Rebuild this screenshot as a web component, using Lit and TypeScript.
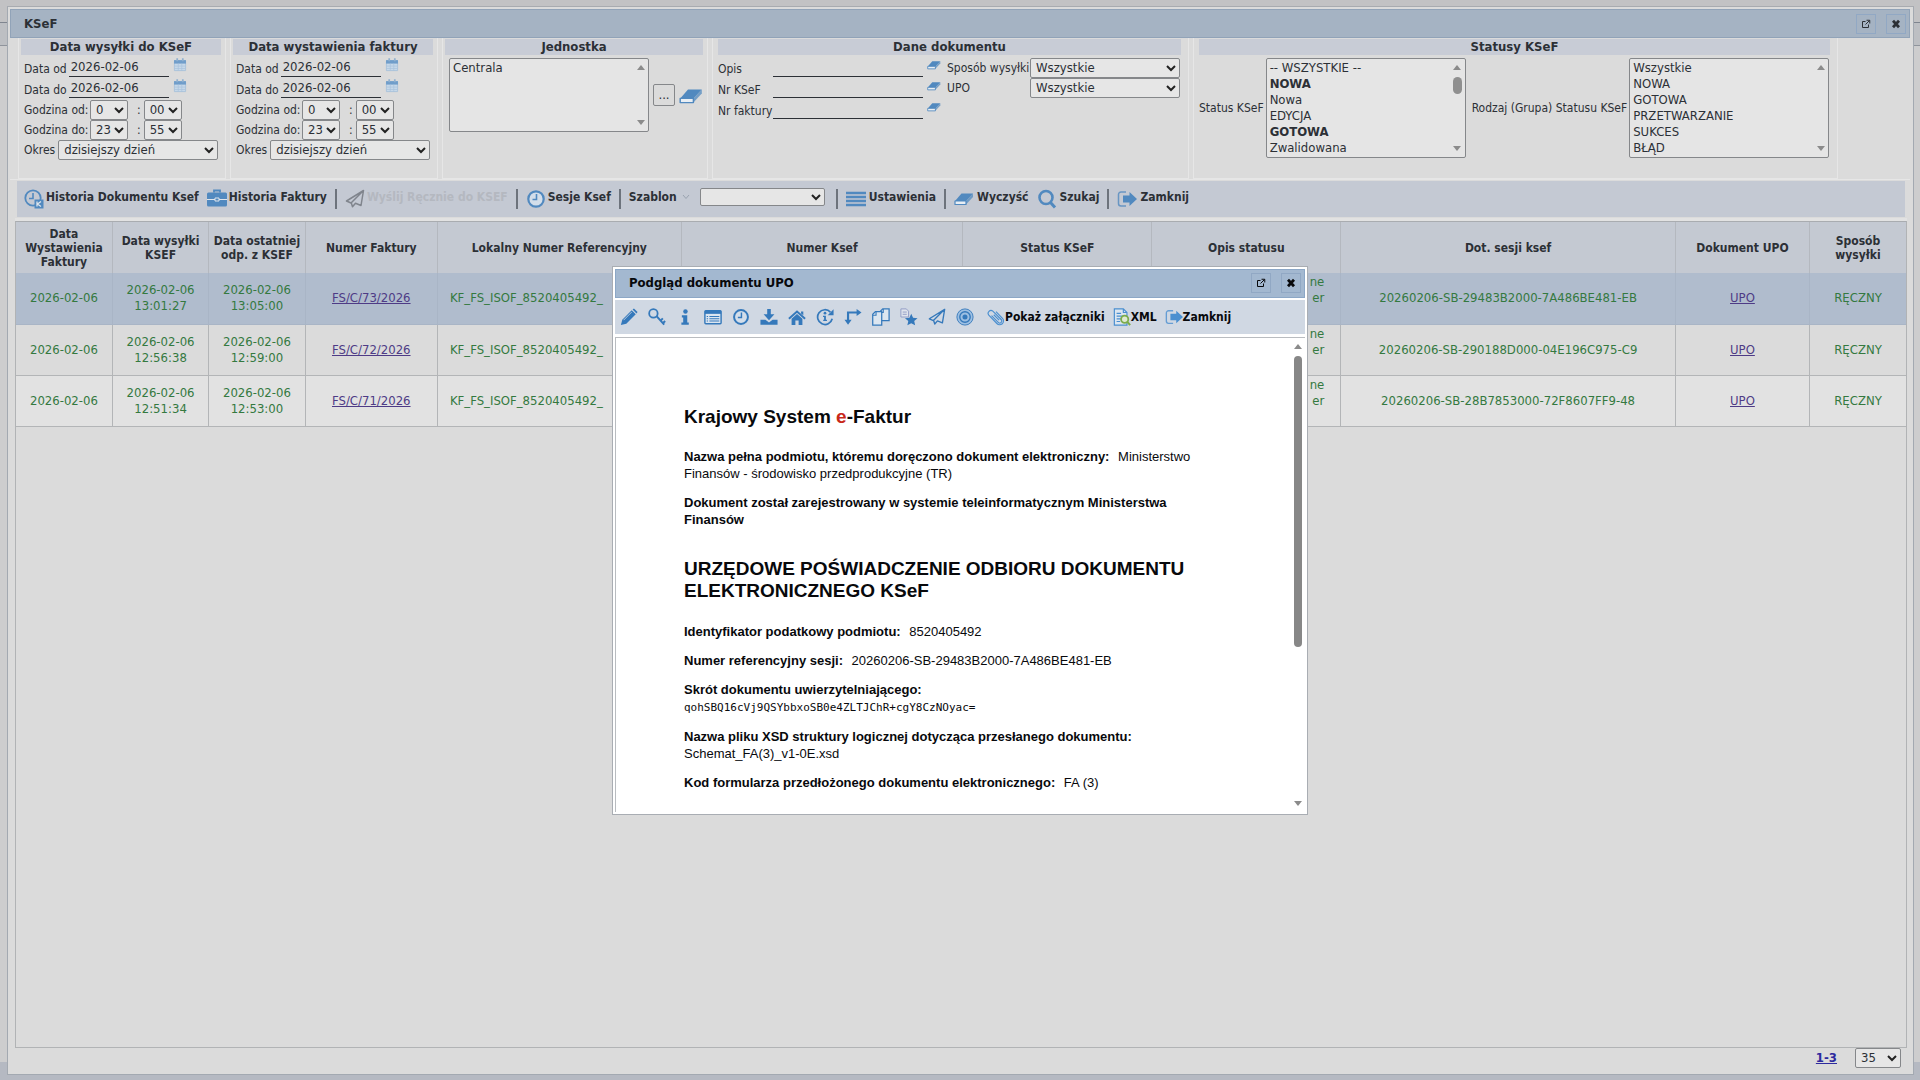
import { LitElement, html, svg, css, nothing, type TemplateResult, type SVGTemplateResult } from "lit";
import { customElement } from "lit/decorators.js";
import { classMap } from "lit/directives/class-map.js";

/* 20x20 line and fill icons; every shape is painted with currentColor unless stated */
const icons: Record<string, SVGTemplateResult> = {
  calendar: svg`<path d="M2 5h16v13H2z" fill="#c6d8e9" stroke="#9dbbd8"/><path d="M1.500 3h17v5h-17z" fill="#6f9dca"/><path d="M6 .5v4M14 .5v4" stroke="#8fb0d0" stroke-width="2.500"/><path d="M2 11.500h16M2 15h16M7.500 8v10M12.500 8v10" stroke="#a9c3dc" fill="none"/>`,
  eraser: svg`<path d="M7.500 4.500H19L12 12H1z" fill="currentColor"/><path d="M1 12h11v3.500H1z" fill="#e8eef4" stroke="currentColor" stroke-width="1.200" stroke-linejoin="round"/><path d="M12 15.500V12l7-7.500V8z" fill="currentColor" opacity=".75"/>`,
  historyDoc: svg`<circle cx="9" cy="9" r="7.700" fill="none" stroke="currentColor" stroke-width="1.800"/><path d="M9 4v5.500H5" fill="none" stroke="currentColor" stroke-width="1.600"/><path d="M10.500 10.500h9v9h-9z" fill="currentColor"/><path d="M13 12.500v5M17 12.500l-3.500 2.500 3.500 2.500" fill="none" stroke="#dfe5ec" stroke-width="1.300"/>`,
  briefcase: svg`<path d="M7 3.500V1.500h6v2" fill="none" stroke="currentColor" stroke-width="1.800"/><rect x="0" y="3.500" width="20" height="14" rx="1.500" fill="currentColor"/><path d="M0 10.500h8M12 10.500h8" stroke="#dfe5ec"/><path d="M8 9h4v3H8z" fill="none" stroke="#dfe5ec"/>`,
  plane: svg`<path d="M18.500 1.500 1.500 12l4.500 2 12.500-12.500-2.500 15-5.500-2.200-3 3.500-1.500-4.800" fill="none" stroke="currentColor" stroke-width="1.500" stroke-linejoin="round"/>`,
  clock: svg`<circle cx="10" cy="10" r="7.700" fill="#d3deea" stroke="currentColor" stroke-width="2.200"/><path d="M10.500 5v5.500H6.500" fill="none" stroke="currentColor" stroke-width="1.600"/>`,
  list: svg`<path d="M0 4h20M0 8h20M0 12h20M0 16h20" stroke="currentColor" stroke-width="2.600"/>`,
  search: svg`<circle cx="9" cy="8.500" r="6.500" fill="none" stroke="currentColor" stroke-width="2.600"/><path d="M13.500 13.500l4.500 5" stroke="currentColor" stroke-width="3"/>`,
  exit: svg`<path d="M9 3H4a2.500 2.500 0 0 0-2.500 2.500v9A2.500 2.500 0 0 0 4 17h5" fill="none" stroke="currentColor" stroke-width="1.500" opacity=".8"/><path d="M6 6.500h6.500V3L20 10l-7.500 7v-3.500H6z" fill="currentColor"/>`,
  open: svg`<path d="M9 5H3v12h12v-6" fill="none" stroke="currentColor" stroke-width="2"/><path d="M11 2.500h6.500V9M17 3l-8 8" fill="none" stroke="currentColor" stroke-width="2"/>`,
  close: svg`<path d="M4 3.500l12 13M16 3.500l-12 13" stroke="currentColor" stroke-width="5.500"/>`,
  pencil: svg`<path d="M1 19l1.500-6L13 2.500l4.500 4.500L7 17.500z" fill="currentColor"/><path d="M14 1.700l1.500-1.200 4 4-1.200 1.500z" fill="currentColor"/><path d="M4 13.500l9-9" stroke="#cfd8e3" stroke-width=".9"/>`,
  key: svg`<circle cx="6" cy="6" r="4.700" fill="none" stroke="currentColor" stroke-width="2"/><path d="M9.500 9l8.500 9.500M14 14l2.500-2.500M16.500 17l2.500-2.500" fill="none" stroke="currentColor" stroke-width="2.200"/>`,
  info: svg`<circle cx="10.500" cy="4" r="2.500" fill="currentColor"/><path d="M6.500 8h6v8h1.700v2.500H6V16h2v-5.500H6.500z" fill="currentColor"/>`,
  card: svg`<rect x="1" y="3" width="18" height="14.500" rx="1" fill="#dce6f0" stroke="currentColor" stroke-width="1.600"/><path d="M1 3h18v3.500H1z" fill="currentColor"/><path d="M6 9.500h11M6 12h11M6 14.500h11" stroke="currentColor" stroke-width="1.200"/><path d="M3 9.500h1.500M3 12h1.500M3 14.500h1.500" stroke="currentColor" stroke-width="1.200"/>`,
  download: svg`<path d="M8 1h4v6h4l-6 6.500L4 7h4z" fill="currentColor"/><path d="M.5 13H6l4 3 4-3h5.500v5.500H.5z" fill="currentColor"/>`,
  home: svg`<path d="M1 12L10 4l9 8" fill="none" stroke="currentColor" stroke-width="2.200"/><path d="M14.500 4H17v4l-2.500-2z" fill="currentColor"/><path d="M4 12l6-5.300 6 5.300v7h-4.200v-5H8.200v5H4z" fill="currentColor"/>`,
  infoRefresh: svg`<path d="M16 4.500A8.200 8.200 0 1 0 18 12" fill="none" stroke="currentColor" stroke-width="1.900"/><path d="M19.500 1.500V8H13z" fill="currentColor"/><circle cx="10" cy="5.700" r="1.500" fill="currentColor"/><path d="M7.800 8.500H11V13h1.200v1.500H8V13h1v-3H7.800z" fill="currentColor"/>`,
  branch: svg`<path d="M4.500 14V5H15" fill="none" stroke="currentColor" stroke-width="2.400"/><path d="M14 1l5.500 4-5.500 4zM.5 13h8l-4 5.500z" fill="currentColor"/>`,
  copies: svg`<path d="M9 14V4l3-3h7v13z" fill="#dce6f0" stroke="currentColor" stroke-width="1.400"/><path d="M12.500 1v4H9" fill="none" stroke="currentColor" stroke-width="1.200"/><path d="M.8 19V7l3-3h7v15z" fill="#dce6f0" stroke="currentColor" stroke-width="1.400"/><path d="M4.500 4v4H1" fill="none" stroke="currentColor" stroke-width="1.200"/>`,
  docStar: svg`<path d="M1 1h6l2.500 2.500V10H1z" fill="#dfe3ec" stroke="#8d98c4"/><path d="M3 4.500h4.500M3 7h4.500" stroke="#8d98c4"/><path d="M12.500 6.500l2 4.200 5 .6-3.700 3.200 1 4.800-4.300-2.400-4.300 2.400 1-4.800-3.700-3.200 5-.6z" fill="currentColor"/>`,
  target: svg`<circle cx="10" cy="10" r="9" fill="#9dbfe2" stroke="currentColor" stroke-width="1"/><circle cx="10" cy="10" r="5.800" fill="none" stroke="currentColor" stroke-width="1.500"/><circle cx="10" cy="10" r="2.800" fill="currentColor"/>`,
  clip: svg`<path d="M5 8.500l7.500 7.500a2.200 2.200 0 0 0 3.200-3.200L6.500 3.500A3.200 3.200 0 0 0 2 8l9 9.200a4.200 4.200 0 0 0 6.200-5.700L10 4M7.500 7.500l6 6" fill="none" stroke="currentColor" stroke-width="1.300"/>`,
  xml: svg`<path d="M1.500 1h10l4 4v14h-14z" fill="#dce6f0" stroke="currentColor" stroke-width="1.300"/><path d="M11.500 1v4h4M4 6h5M4 9h8M4 12h5M4 15h4" fill="none" stroke="currentColor" stroke-width="1.300"/><circle cx="13" cy="12.500" r="4" fill="#dfead2" stroke="#7cac4a" stroke-width="2"/><path d="M16 15.500l3 3.500" stroke="#7cac4a" stroke-width="2.200"/>`,
};

const icon = (name: string, size = "m") =>
  html`<svg class="icon ${size}" viewBox="0 0 20 20" aria-hidden="true">${icons[name]}</svg>`;

const shared = css`
  * { box-sizing: border-box; }
  button, select, input { font: inherit; color: inherit; margin: 0; }
  button { border: 0; padding: 0; background: none; }
  .icon { display: block; flex: none; width: 20px; height: 20px; }
  .icon.s { width: 16px; height: 16px; }
  .icon.l { width: 24px; height: 24px; }
  .icon.xs { width: 10px; height: 10px; }
  .titlebar {
    display: flex; align-items: center; gap: 10px; flex: none; height: 29px;
    padding: 0 3px 0 13px; font-size: 13px; font-weight: bold;
    background: #a5b3c3; border: 1px solid #91a3b8;
  }
  .titlebar h1, .titlebar h2 { margin: 0; flex: 1; font-size: 13px; line-height: 16px; }
  .winbtn {
    display: grid; place-items: center; width: 20px; height: 20px;
    border: 1px solid #91a8c4;
  }
  .arrow-up, .arrow-down { border: 4px solid transparent; width: 0; height: 0; }
  .arrow-up { border-bottom: 5px solid #8b8b8b; border-top: 0; }
  .arrow-down { border-top: 5px solid #8b8b8b; border-bottom: 0; }
`;

interface ListOption { text: string; bold?: boolean; }

interface Row { date: string; sent: string; reply: string; number: string; session: string; }

const rows: Row[] = [
  { date: "2026-02-06", sent: "13:01:27", reply: "13:05:00", number: "FS/C/73/2026", session: "20260206-SB-29483B2000-7A486BE481-EB" },
  { date: "2026-02-06", sent: "12:56:38", reply: "12:59:00", number: "FS/C/72/2026", session: "20260206-SB-290188D000-04E196C975-C9" },
  { date: "2026-02-06", sent: "12:51:34", reply: "12:53:00", number: "FS/C/71/2026", session: "20260206-SB-28B7853000-72F8607FF9-48" },
];

const columns: [string, string][] = [
  ["Data Wystawienia Faktury", "c-date"], ["Data wysyłki KSEF", "c-sent"], ["Data ostatniej odp. z KSEF", "c-reply"],
  ["Numer Faktury", "c-num"], ["Lokalny Numer Referencyjny", "c-ref"], ["Numer Ksef", "c-ksef"], ["Status KSeF", "c-status"],
  ["Opis statusu", "c-desc"], ["Dot. sesji ksef", "c-session"], ["Dokument UPO", "c-upo"], ["Sposób wysyłki", "c-mode"],
];

/* Floating preview of the official receipt */
@customElement("upo-dialog")
export class UpoDialog extends LitElement {
  static styles = [shared, css`
    :host {
      display: flex; flex-direction: column; width: min(696px, 100%); height: min(549px, 100%);
      padding: 2px; background: #fff; border: 1px solid #a9adb3; color: #08090c;
      box-sizing: border-box;
    }
    .titlebar { background: #a3b8d0; border-color: #8ca7c6; }
    .tools { display: flex; align-items: center; flex: none; height: 34px; margin-top: 2px; background: #d0d8e3; color: #3579bb; }
    .tool { display: grid; place-items: center; width: 28px; height: 34px; }
    .tool .icon { width: 18px; height: 18px; }
    .text-tool { display: flex; align-items: center; font-size: 12px; font-weight: bold; color: #08090c; margin-left: 8px; }
    .text-tool .icon { color: #4a8fd0; width: 18px; height: 18px; }
    .view { flex: 1; min-height: 0; display: flex; margin: 3px 0 0; border: 1px solid #b9bcc0; border-width: 1px 0 0 1px; }
    .doc { flex: 1; min-width: 0; overflow: hidden; padding: 68px 67px 0 68px; font: 13px/17px "Liberation Sans", Arial, sans-serif; }
    .doc p { margin: 0 0 12px; }
    .doc b { margin-right: 5px; }
    .doc h3 { margin: 0 0 20px; font-size: 19px; line-height: 22px; }
    .doc h3.main { margin: 30px 0 21px; }
    .doc em { color: #c8281a; font-style: normal; }
    .doc .hash { display: block; padding-top: 1px; font-family: "DejaVu Sans Mono", monospace; font-size: 11px; }
    .doc .below { display: block; }
    .bar { flex: none; width: 14px; display: flex; flex-direction: column; align-items: center; padding: 6px 0; }
    .thumb { width: 8px; height: 291px; margin-top: 7px; border-radius: 4px; background: #878787; }
    .bar .arrow-down { margin-top: auto; }
  `];

  private tools: [string, string][] = [
    ["pencil", "Edytuj"], ["key", "Klucz"], ["info", "Informacja"], ["card", "Szczegóły"], ["clock", "Historia"],
    ["download", "Pobierz"], ["home", "Start"], ["infoRefresh", "Odśwież"], ["branch", "Powiązania"], ["copies", "Kopiuj"],
    ["docStar", "Ulubione"], ["plane", "Wyślij"], ["target", "Cel"],
  ];

  render() {
    return html`
      <header class="titlebar">
        <h2>Podgląd dokumentu UPO</h2>
        <button class="winbtn" aria-label="Otwórz w oknie">${icon("open", "xs")}</button>
        <button class="winbtn" aria-label="Zamknij okno">${icon("close", "xs")}</button>
      </header>
      <div class="tools" role="toolbar">
        ${this.tools.map(([name, label]) => html`<button class="tool" aria-label=${label}>${icon(name)}</button>`)}
        <button class="text-tool">${icon("clip")}Pokaż załączniki</button>
        <button class="text-tool">${icon("xml")}XML</button>
        <button class="text-tool">${icon("exit")}Zamknij</button>
      </div>
      <div class="view">
        <article class="doc">
          <h3>Krajowy System <em>e</em>-Faktur</h3>
          <p><b>Nazwa pełna podmiotu, któremu doręczono dokument elektroniczny:</b> Ministerstwo Finansów - środowisko przedprodukcyjne (TR)</p>
          <p><b>Dokument został zarejestrowany w systemie teleinformatycznym Ministerstwa Finansów</b></p>
          <h3 class="main">URZĘDOWE POŚWIADCZENIE ODBIORU DOKUMENTU ELEKTRONICZNEGO KSeF</h3>
          <p><b>Identyfikator podatkowy podmiotu:</b> 8520405492</p>
          <p><b>Numer referencyjny sesji:</b> 20260206-SB-29483B2000-7A486BE481-EB</p>
          <p><b>Skrót dokumentu uwierzytelniającego:</b> <span class="hash">qohSBQ16cVj9QSYbbxoSB0e4ZLTJChR+cgY8CzNOyac=</span></p>
          <p><b>Nazwa pliku XSD struktury logicznej dotycząca przesłanego dokumentu:</b> <span class="below">Schemat_FA(3)_v1-0E.xsd</span></p>
          <p><b>Kod formularza przedłożonego dokumentu elektronicznego:</b> FA (3)</p>
        </article>
        <div class="bar" aria-hidden="true"><i class="arrow-up"></i><i class="thumb"></i><i class="arrow-down"></i></div>
      </div>`;
  }
}

@customElement("app-root")
export class AppRoot extends LitElement {
  static styles = [shared, css`
    :host {
      display: block; position: relative; min-height: 100vh; padding: 6px 6px 5px 7px; box-sizing: border-box;
      font: 12px/16px "DejaVu Sans Condensed", "DejaVu Sans", Tahoma, sans-serif; color: #2c3036;
      background: linear-gradient(#c2c2c4 0 22px, #7f858f 22px 23px, #bdbfc3 23px 45px, #8f949c 45px 46px, #cdcdce 46px calc(100% - 18px), #b5b9c2 calc(100% - 18px));
    }
    .window {
      display: flex; flex-direction: column; min-height: calc(100vh - 11px); padding: 2px 3px 3px 2px;
      background: #dbdbdb; border: 1px solid #a3a9b1; border-top-color: #a8abb0;
    }
    .scrim-pane { position: absolute; inset: 0; display: grid; place-items: center; }

    .filters {
      display: grid; grid-template-columns: 208px 208px 266px 477px 645px; gap: 4px; height: 142px;
      padding-left: 8px; border-bottom: 1px solid #e6e6e6;
    }
    .panel { padding: 1px 4px 0 2px; border: 1px solid #e6e6e6; border-top: 0; }
    .panel.wide { padding: 1px 7px 0 5px; }
    .panel h2 {
      margin: 0 0 3px; height: 16px; font-size: 13px; line-height: 16px; text-align: center; background: #c8ccd6;
    }
    .field { display: flex; height: 21px; padding-left: 3px; gap: 2px; line-height: 22px; }
    .field input {
      width: 100px; height: 19px; padding: 0 2px 1px; font-size: 13px; background: none; border: 0; border-bottom: 1px solid #2c3036;
      border-radius: 0;
    }
    .field .icon { width: 14px; height: 14px; margin-left: 2px; }
    .field button { align-self: flex-start; }
    .hour { display: flex; align-items: center; gap: 3px; height: 20px; padding-left: 3px; }
    .hour .colon { margin-left: 6px; }
    .hour label { width: 63px; white-space: nowrap; }
    .filters .hour label.auto { width: auto; }
    select.pick {
      appearance: none; height: 20px; padding: 0 5px; font-size: 13px; line-height: 16px;
      border: 1px solid #85878a; border-radius: 2px;
      background: #e6e6e6 url("data:image/svg+xml,%3Csvg xmlns='http://www.w3.org/2000/svg' width='10' height='7'%3E%3Cpath d='M1 1l4 4 4-4' fill='none' stroke='%23222' stroke-width='2'/%3E%3C/svg%3E") no-repeat right 3px center;
    }
    .w-hour { width: 38px; }
    .w-period { width: 160px; }
    .w-kind { width: 150px; }
    .w-template { width: 125px; }
    .hour select.w-hour { padding-right: 0; }

    .unit { display: flex; align-items: flex-start; gap: 4px; padding-left: 4px; }
    .more { flex: none; width: 22px; height: 22px; border: 1px solid #85878a; border-radius: 2px; font-size: 13px; }
    .unit .more, .unit .erase { margin-top: 26px; }
    .unit .erase { color: #5189bf; }
    .listbox { position: relative; flex: none; width: 200px; }
    .listbox select {
      display: block; width: 100%; height: 100px; padding: 1px 0; font-size: 13px; overflow: hidden; scrollbar-width: none;
      border: 1px solid #85878a; border-radius: 2px; background: #e5e5e5; outline: 0;
    }
    .listbox.short select { height: 74px; }
    .listbox option { height: 16px; min-height: 16px; padding: 0 3px; line-height: 16px; }
    .listbox option.bold { font-weight: bold; }
    .scroll { position: absolute; top: 7px; bottom: 7px; right: 4px; display: flex; flex-direction: column; align-items: center; pointer-events: none; }
    .scroll .knob { width: 9px; height: 17px; margin-top: 7px; border-radius: 5px; background: #8f8f8f; }
    .scroll .arrow-down { margin-top: auto; }
    .two { display: grid; grid-template-columns: 229px auto; }
    .doc-field { display: grid; grid-template-columns: 55px 150px 18px; height: 21px; line-height: 22px; }
    .doc-field input { height: 19px; padding: 0; background: none; border: 0; border-bottom: 1px solid #2c3036; border-radius: 0; font-size: 13px; }
    .doc-field button { align-self: flex-start; padding-left: 3px; color: #5189bf; }
    .doc-field .icon { height: 14px; }
    .kind { display: grid; grid-template-columns: 83px 150px; height: 20px; align-items: center; white-space: nowrap; }
    .statuses { display: flex; align-items: center; gap: 2px; white-space: nowrap; }
    .statuses label + .listbox { margin-right: 4px; }

    .toolbar {
      display: flex; align-items: center; height: 36px; margin: 1px 5px 0 7px; padding: 0 0 4px 7px; gap: 8px;
      background: #c4c9d3; font-size: 12px; font-weight: bold; white-space: nowrap;
    }
    .cmd { display: flex; align-items: center; gap: 2px; font-weight: bold; }
    .cmd .icon { color: #5189bf; margin-top: 3px; }
    .cmd.off { color: #b4b8c0; }
    .cmd.off .icon { color: #80858d; }
    .rule { width: 2px; height: 20px; background: #6d737c; margin-top: 4px; }
    .toolbar .pick { height: 18px; margin: 0 3px 0 2px; }
    .pick ~ .cmd { gap: 3px; }
    .cmd .drop { width: 8px; height: 6px; margin-left: 3px; }

    .grid { flex: 1; margin: 4px 3px 0 5px; border: 1px solid #b1b3b5; border-top-color: #a9acb0; box-shadow: 0 -3px 0 #e2e2e2; }
    table { width: 100%; border-collapse: collapse; table-layout: fixed; }
    th { height: 51px; padding: 0 2px; line-height: 14px; font-size: 12px; background: #c4c9d2; border-right: 1px solid #b4b8bf; }
    td { height: 51px; padding: 0 12px; text-align: center; font-size: 13px; color: #34793f; border: 1px solid #b3b5b7; border-width: 0 1px 1px 0; }
    td:last-child, th:last-child { border-right: 0; }
    tr.odd td { background: #e2e2e2; }
    tr.current td { background: #b0bccd; border-color: #a9b5c6; }
    td a { color: #4e3b86; }
    td.c-desc { text-align: right; padding-right: 16px; }
    td.c-ref { text-align: left; white-space: nowrap; }
    th.c-date { width: 5.1%; } th.c-sent { width: 5.1%; } th.c-reply { width: 5.1%; } th.c-num { width: 7%; }
    th.c-ref { width: 12.9%; } th.c-ksef { width: 14.9%; } th.c-status { width: 10%; } th.c-desc { width: 10%; }
    th.c-session { width: 17.7%; } th.c-upo { width: 7.1%; }

    .pager { display: flex; justify-content: flex-end; flex: none; gap: 18px; height: 23px; padding-right: 9px; line-height: 20px; }
    .pager a { font-weight: bold; font-size: 13px; color: #2e2a9e; }
    .pager .pick { width: 46px; }
  `];

  private pick(id: string, cls: string, value: string) {
    return html`<select id=${id} class="pick ${cls}" aria-label=${id}><option>${value}</option></select>`;
  }

  private datePanel(title: string, key: string) {
    const dateRow = (label: string, id: string) => html`
      <div class="field"><label for=${id}>${label}</label><input id=${id} value="2026-02-06"><button aria-label="Kalendarz">${icon("calendar", "s")}</button></div>`;
    const hourRow = (label: string, id: string, h: string, m: string) => html`
      <div class="hour"><label for=${id}>${label}</label>${this.pick(id, "w-hour", h)}<span class="colon">:</span>${this.pick(`${id}-min`, "w-hour", m)}</div>`;
    return html`
      <section class="panel">
        <h2>${title}</h2>
        ${dateRow("Data od", `${key}-od`)}${dateRow("Data do", `${key}-do`)}
        ${hourRow("Godzina od:", `${key}-godz-od`, "0", "00")}${hourRow("Godzina do:", `${key}-godz-do`, "23", "55")}
        <div class="hour"><label class="auto" for="${key}-okres">Okres</label>${this.pick(`${key}-okres`, "w-period", "dzisiejszy dzień")}</div>
      </section>`;
  }

  private listbox(id: string, label: string, options: ListOption[], opts: { short?: boolean; knob?: boolean } = {}) {
    return html`
      <div class=${classMap({ listbox: true, short: !!opts.short })}>
        <select id=${id} multiple aria-label=${label}>
          ${options.map(o => html`<option class=${o.bold ? "bold" : ""}>${o.text}</option>`)}
        </select>
        <div class="scroll" aria-hidden="true"><i class="arrow-up"></i>${opts.knob ? html`<i class="knob"></i>` : nothing}<i class="arrow-down"></i></div>
      </div>`;
  }

  private cmd(name: string | null, label: string, extra: TemplateResult | typeof nothing = nothing) {
    return html`<button class="cmd">${name ? icon(name) : nothing}${label}${extra}</button>`;
  }

  private docField(label: string, id: string) {
    return html`<div class="doc-field"><label for=${id}>${label}</label><input id=${id}><button aria-label="Wyczyść pole">${icon("eraser", "s")}</button></div>`;
  }

  render() {
    const rule = html`<span class="rule"></span>`;
    return html`
      <main class="window">
        <header class="titlebar">
          <h1>KSeF</h1>
          <button class="winbtn" aria-label="Otwórz w oknie">${icon("open", "xs")}</button>
          <button class="winbtn" aria-label="Zamknij okno">${icon("close", "xs")}</button>
        </header>

        <div class="filters">
          ${this.datePanel("Data wysyłki do KSeF", "wysylka")}
          ${this.datePanel("Data wystawienia faktury", "wystawienie")}
          <section class="panel">
            <h2>Jednostka</h2>
            <div class="unit">
              ${this.listbox("jednostka", "Jednostka", [{ text: "Centrala" }], { short: true })}
              <button class="more">...</button>
              <button class="erase" aria-label="Wyczyść jednostkę">${icon("eraser", "l")}</button>
            </div>
          </section>
          <section class="panel wide">
            <h2>Dane dokumentu</h2>
            <div class="two">
              <div>${this.docField("Opis", "opis")}${this.docField("Nr KSeF", "nr-ksef")}${this.docField("Nr faktury", "nr-faktury")}</div>
              <div>
                <div class="kind"><label for="sposob">Sposób wysyłki</label>${this.pick("sposob", "w-kind", "Wszystkie")}</div>
                <div class="kind"><label for="upo">UPO</label>${this.pick("upo", "w-kind", "Wszystkie")}</div>
              </div>
            </div>
          </section>
          <section class="panel wide">
            <h2>Statusy KSeF</h2>
            <div class="statuses">
              <label for="status">Status KSeF</label>
              ${this.listbox("status", "Status KSeF", [
                { text: "-- WSZYSTKIE --" }, { text: "NOWA", bold: true }, { text: "Nowa" }, { text: "EDYCJA" },
                { text: "GOTOWA", bold: true }, { text: "Zwalidowana" }], { knob: true })}
              <label for="grupa">Rodzaj (Grupa) Statusu KSeF</label>
              ${this.listbox("grupa", "Rodzaj (Grupa) Statusu KSeF", [
                { text: "Wszystkie" }, { text: "NOWA" }, { text: "GOTOWA" }, { text: "PRZETWARZANIE" }, { text: "SUKCES" }, { text: "BŁĄD" }])}
            </div>
          </section>
        </div>

        <nav class="toolbar">
          ${this.cmd("historyDoc", "Historia Dokumentu Ksef")}${this.cmd("briefcase", "Historia Faktury")}${rule}
          <button class="cmd off" disabled>${icon("plane")}Wyślij Ręcznie do KSEF</button>${rule}
          ${this.cmd("clock", "Sesje Ksef")}${rule}
          ${this.cmd(null, "Szablon", html`<svg class="drop" viewBox="0 0 8 6"><path d="M1 1l3 3.500L7 1" fill="none" stroke="#9aa3b0"/></svg>`)}
          ${this.pick("szablon", "w-template", "")}${rule}
          ${this.cmd("list", "Ustawienia")}${rule}
          ${this.cmd("eraser", "Wyczyść")}${this.cmd("search", "Szukaj")}${rule}
          ${this.cmd("exit", "Zamknij")}
        </nav>

        <div class="grid">
          <table>
            <thead><tr>${columns.map(([label, cls]) => html`<th class=${cls} scope="col">${label}</th>`)}</tr></thead>
            <tbody>
              ${rows.map((r, i) => html`
                <tr class=${classMap({ current: i === 0, odd: i === 2 })}>
                  <td>${r.date}</td>
                  <td>${r.date}<br>${r.sent}</td>
                  <td>${r.date}<br>${r.reply}</td>
                  <td><a href="#">${r.number}</a></td>
                  <td class="c-ref">KF_FS_ISOF_8520405492_</td>
                  <td></td>
                  <td></td>
                  <td class="c-desc">ne<br>er<br>&nbsp;</td>
                  <td>${r.session}</td>
                  <td><a href="#">UPO</a></td>
                  <td>RĘCZNY</td>
                </tr>`)}
            </tbody>
          </table>
        </div>

        <footer class="pager"><a href="#">1-3</a>${this.pick("na-stronie", "", "35")}</footer>
      </main>
      <div class="scrim-pane"><upo-dialog role="dialog" aria-label="Podgląd dokumentu UPO"></upo-dialog></div>`;
  }
}
